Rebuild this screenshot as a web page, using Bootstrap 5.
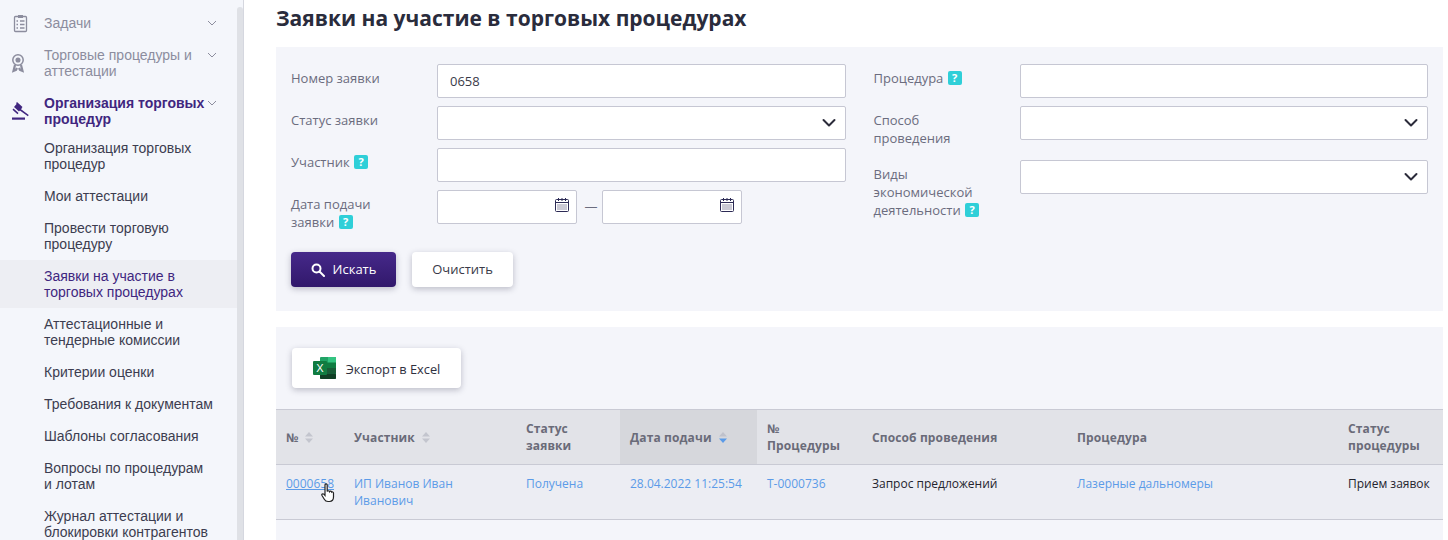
<!DOCTYPE html>
<html lang="ru">
<head>
<meta charset="utf-8">
<title>Заявки</title>
<link rel="stylesheet" href="https://cdn.jsdelivr.net/npm/bootstrap@5.3.0/dist/css/bootstrap.min.css">
<style>
html,body{height:540px;overflow:hidden;background:#fff}
body{font-family:"Open Sans","Noto Sans",sans-serif;font-size:13px;color:#2b2b3a}
.shell{height:540px;overflow:hidden}
.side{width:244px;flex:none;background:#f4f6fb;border-right:1px solid #d5d7df;overflow:hidden}
.side-list{width:237px;flex:none;padding-top:15px;font-family:"Liberation Sans",Arial,sans-serif;font-size:14px;line-height:16px}
.side-thumb{width:6px;flex:none;margin-top:7px;background:#dfe1e6;border-radius:3px 3px 0 0}
.top-item{position:relative;padding-left:44px;padding-right:24px;margin-bottom:16px;color:#8c8d9e}
.top-item.on{color:#40267f;font-weight:700;margin-bottom:5px}
.top-ico{position:absolute;left:10px;top:0;width:22px;height:22px}
.ico-award{top:5px;left:9px}
.ico-gavel{top:7px;left:9px}
.chev{position:absolute;left:207px;top:5px;width:10px;height:6px}
.sub-item{padding:8px 24px 8px 44px;color:#3c3d50}
.sub-item.on{background:#edeef3;color:#40267f}
.main{flex:1;min-width:0;padding:5px 5px 0 32px}
.page-title{font-size:21px;font-weight:700;line-height:26px;margin:0 0 16px;color:#2a2c3c}
.panel-f{background:#f4f5fa;height:264px;padding:17px 15px 0;margin-bottom:16px}
.cols{--bs-gutter-x:28px}
.frow{display:flex;margin-bottom:8px}
.flabel{width:146px;flex:none;color:#6b6c7e;line-height:18px;padding:5px 30px 5px 0}
.fbox{flex:1;min-width:0;height:34px;border:1px solid #c6c7d3;border-radius:2px;color:#3a3a48;padding:0 12px;font-size:13px;box-shadow:none}
.fbox.form-control,.fbox.form-select{padding:0 12px;font-size:13px;min-height:0;border-radius:2px;border-color:#c6c7d3;background-color:#fff}
.fbox.form-select{background-repeat:no-repeat;background-position:right 8px center;background-size:16px 16px;background-image:url("data:image/svg+xml,%3csvg xmlns='http://www.w3.org/2000/svg' viewBox='0 0 16 16'%3e%3cpath fill='none' stroke='%232b2b3a' stroke-linecap='round' stroke-linejoin='round' stroke-width='2' d='m2.500 5 5.500 5.500L13.500 5'/%3e%3c/svg%3e")}
.dates{flex:1;display:flex;align-items:flex-start}
.datebox{position:relative;width:140px;height:34px;border:1px solid #c6c7d3;border-radius:2px;background:#fff}
.datebox svg{position:absolute;right:7px;top:7px;width:14px;height:14px}
.dash{width:25px;padding-left:3px;text-align:center;line-height:32px;color:#6b6c7e}
.qmark{display:inline-block;width:14px;height:14px;border-radius:2px;background:#2fcfd8;color:#fff;font-weight:700;font-size:11px;line-height:14px;text-align:center;vertical-align:1px;margin-left:1px}
.acts{display:flex;gap:16px;margin-top:8px}
.btn-find,.btn-clear,.btn-xls{height:35px;border:0;border-radius:4px;font-size:13px;display:flex;align-items:center;justify-content:center;box-shadow:0 2px 6px rgba(40,40,70,.28)}
.btn-find{width:105px;color:#fff;background:linear-gradient(180deg,#46298a,#31186b);gap:8px}
.btn-find:hover,.btn-find:active{color:#fff}
.btn-clear{width:101px;background:#fff;color:#3a3a48}
.panel-t{background:#f4f5fa;height:213px;padding-top:21px;overflow:hidden}
.btn-xls{width:169px;height:40px;margin-left:16px;background:#fff;color:#2f3040;gap:9px;margin-bottom:21px}
.xls-ico{width:24px;height:22px}
.xls-text{margin-top:3px;font-size:12.8px}
.tbl{table-layout:fixed;width:1167px;margin:0;--bs-table-bg:transparent;font-size:12px;line-height:17px}
.tbl th{background:#e2e3e8;height:55px;padding:0 10px;vertical-align:middle;color:#6a6b79;font-weight:700;border-top:1px solid #c9cad4;border-bottom:1px solid #c9cad4;letter-spacing:.12px}
.tbl th.sorted{background:#d6d7dc}
.tbl td{background:#ecedf3;height:55px;padding:10px 10px 0;vertical-align:top;color:#24242e;border-bottom:1px solid #c9cad4}
.tbl a{color:#5b9be8;text-decoration:none}
.tbl a.hov{text-decoration:underline}
.sort{display:inline-block;width:8px;height:11px;margin-left:7px;vertical-align:-1px}
.cell-cursor{position:relative}
.hand{position:absolute;left:45px;top:18px;width:14px;height:20px}
</style>
</head>
<body>
<div class="d-flex shell">
  <aside class="side d-flex">
    <div class="side-list">
      <div class="top-item">
        <svg class="top-ico" viewBox="0 0 22 22" fill="none" stroke="#8c8d9e" stroke-width="1.3"><rect x="4.500" y="1.500" width="12" height="15" rx="1"/><rect x="8" y="0" width="5" height="3" fill="#8c8d9e" stroke="none"/><path d="M6.500 6h1.500M6.500 9.500h1.500M6.500 13h1.500M10 6h4.500M10 9.500h4.500M10 13h4.500"/></svg>
        Задачи
        <svg class="chev" viewBox="0 0 10 6" fill="none" stroke="#8c8d9e"><path d="m1 1 4 4 4-4"/></svg>
      </div>
      <div class="top-item">
        <svg class="top-ico ico-award" viewBox="0 0 22 22" fill="none" stroke="#8c8d9e" stroke-width="1.500"><circle cx="9" cy="8" r="5.200"/><circle cx="9" cy="8" r="1.800" fill="#8c8d9e"/><path stroke-width="2.200" d="m6 13-1.500 6 2.500-1 1-2M12 13l1.500 6-2.500-1-1-2"/></svg>
        Торговые процедуры и аттестации
        <svg class="chev" viewBox="0 0 10 6" fill="none" stroke="#8c8d9e"><path d="m1 1 4 4 4-4"/></svg>
      </div>
      <div class="top-item on">
        <svg class="top-ico ico-gavel" viewBox="0 0 22 22" fill="#40267f"><path d="m8 0 5.500 5-1 1.200-5.500-5zM5 5 8 1.500l5 4.500-3 3.500z"/><path d="m9.500 7.500 1.200-1.200 9 6.700-.8 1.200zM3.500 7.700l1-1.200 5 4.500-1 1.200z"/><rect x="3" y="15.500" width="13" height="2.200"/></svg>
        Организация торговых процедур
        <svg class="chev" viewBox="0 0 10 6" fill="none" stroke="#8c8d9e"><path d="m1 1 4 4 4-4"/></svg>
      </div>
      <div class="sub-item">Организация торговых процедур</div>
      <div class="sub-item">Мои аттестации</div>
      <div class="sub-item">Провести торговую процедуру</div>
      <div class="sub-item on">Заявки на участие в торговых процедурах</div>
      <div class="sub-item">Аттестационные и тендерные комиссии</div>
      <div class="sub-item">Критерии оценки</div>
      <div class="sub-item">Требования к документам</div>
      <div class="sub-item">Шаблоны согласования</div>
      <div class="sub-item">Вопросы по процедурам и лотам</div>
      <div class="sub-item">Журнал аттестации и блокировки контрагентов</div>
    </div>
    <div class="side-thumb"></div>
  </aside>
  <main class="main">
    <h1 class="page-title">Заявки на участие в торговых процедурах</h1>
    <section class="panel-f">
      <div class="row cols">
        <div class="col-6">
          <div class="frow"><label class="flabel">Номер заявки</label><input class="fbox form-control" value="0658"></div>
          <div class="frow"><label class="flabel">Статус заявки</label><select class="fbox form-select"><option></option></select></div>
          <div class="frow"><label class="flabel">Участник <span class="qmark">?</span></label><input class="fbox form-control"></div>
          <div class="frow"><label class="flabel">Дата подачи<br>заявки <span class="qmark">?</span></label>
            <div class="dates">
              <div class="datebox"><svg viewBox="0 0 14 14" fill="none" stroke="#2c2a55"><rect x=".5" y="1.500" width="13" height="12" rx="1"/><path d="M.5 4.500h13M3.500 0v3M7 0v3M10.500 0v3"/><path stroke-dasharray="1 1" d="M2.500 7h9M2.500 9h9M2.500 11h9"/></svg></div>
              <div class="dash">—</div>
              <div class="datebox"><svg viewBox="0 0 14 14" fill="none" stroke="#2c2a55"><rect x=".5" y="1.500" width="13" height="12" rx="1"/><path d="M.5 4.500h13M3.500 0v3M7 0v3M10.500 0v3"/><path stroke-dasharray="1 1" d="M2.500 7h9M2.500 9h9M2.500 11h9"/></svg></div>
            </div>
          </div>
        </div>
        <div class="col-6">
          <div class="frow"><label class="flabel">Процедура <span class="qmark">?</span></label><input class="fbox form-control"></div>
          <div class="frow"><label class="flabel">Способ проведения</label><select class="fbox form-select"><option></option></select></div>
          <div class="frow"><label class="flabel">Виды<br>экономической<br>деятельности <span class="qmark">?</span></label><select class="fbox form-select"><option></option></select></div>
        </div>
      </div>
      <div class="acts">
        <button class="btn btn-find" type="button"><svg width="14" height="14" viewBox="0 0 14 14" fill="none" stroke="#fff" stroke-width="2"><circle cx="5.500" cy="5.500" r="4"/><path d="m8.500 8.500 4.500 4.500" stroke-linecap="round"/></svg>Искать</button>
        <button class="btn btn-clear" type="button">Очистить</button>
      </div>
    </section>
    <section class="panel-t">
      <button class="btn btn-xls" type="button">
        <svg class="xls-ico" viewBox="0 0 24 22"><rect x="7" y="0" width="16" height="22" rx="1" fill="#21a366"/><rect x="15" y="0" width="8" height="6" fill="#33c481"/><rect x="7" y="5.500" width="16" height="5.500" fill="#107c41"/><rect x="15" y="11" width="8" height="5.500" fill="#185c37"/><rect x="7" y="11" width="8" height="5.500" fill="#185c37"/><rect x="7" y="16.500" width="16" height="5.500" rx="1" fill="#103f25"/><rect x="0" y="4" width="14" height="14" rx="1" fill="#107c41"/><text x="7" y="15" text-anchor="middle" font-family="Liberation Sans" font-size="11" fill="#fff">X</text></svg>
        <span class="xls-text">Экспорт в Excel</span>
      </button>
      <table class="table tbl">
        <colgroup><col style="width:68px"><col style="width:172px"><col style="width:104px"><col style="width:137px"><col style="width:105px"><col style="width:205px"><col style="width:271px"><col style="width:105px"></colgroup>
        <thead><tr>
          <th>№<svg class="sort" viewBox="0 0 8 11" fill="#c3c5ce"><path d="M4 0l4 4.500H0zM4 11 0 6.500h8z"/></svg></th>
          <th>Участник<svg class="sort" viewBox="0 0 8 11" fill="#c3c5ce"><path d="M4 0l4 4.500H0zM4 11 0 6.500h8z"/></svg></th>
          <th>Статус заявки</th>
          <th class="sorted">Дата подачи<svg class="sort" viewBox="0 0 8 11"><path fill="#bfc1cb" d="M4 0l4 4.500H0z"/><path fill="#5b9be8" d="M4 11 0 6.500h8z"/></svg></th>
          <th>№ Процедуры</th>
          <th>Способ проведения</th>
          <th>Процедура</th>
          <th>Статус процедуры</th>
        </tr></thead>
        <tbody><tr>
          <td class="cell-cursor"><a class="hov" href="#">0000658</a>
            <svg class="hand" viewBox="0 0 14 20" fill="#fff" stroke="#222" stroke-width="1.200"><path d="M4 2c0-1.500 2.200-1.500 2.200 0v6.500c.5-1 2-1 2.300.2.500-.8 2-.7 2.200.4.500-.4 1.800-.2 1.800 1v4c0 2.500-1.500 4.400-4 4.400H7c-1.800 0-3-1-3.700-2.300L1 12.500c-.7-1.200.8-2.300 1.800-1.300L4 12.500z"/></svg>
          </td>
          <td><a href="#">ИП Иванов Иван Иванович</a></td>
          <td><a href="#">Получена</a></td>
          <td><a href="#">28.04.2022 11:25:54</a></td>
          <td><a href="#">Т-0000736</a></td>
          <td>Запрос предложений</td>
          <td><a href="#">Лазерные дальномеры</a></td>
          <td>Прием заявок</td>
        </tr></tbody>
      </table>
    </section>
  </main>
</div>
<script src="https://cdn.jsdelivr.net/npm/bootstrap@5.3.0/dist/js/bootstrap.bundle.min.js"></script>
</body>
</html>
